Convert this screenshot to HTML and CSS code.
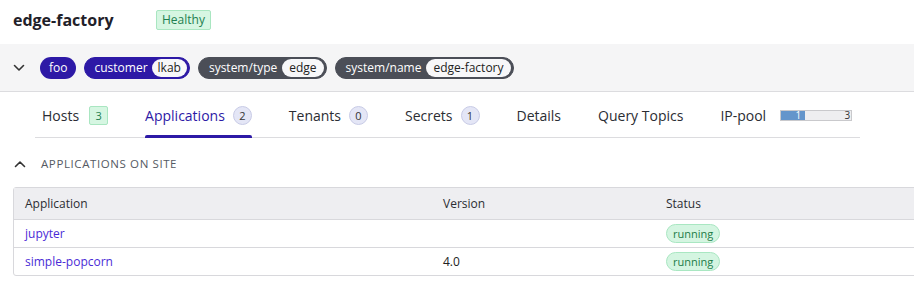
FILE: index.html
```html
<!DOCTYPE html>
<html>
<head>
<meta charset="utf-8">
<link rel="stylesheet" href="styles.css">
</head>
<body>
<div class="page">
  <header class="title-row">
    <h1 class="title">edge-factory</h1>
    <span class="health">Healthy</span>
  </header>
  <div class="labels">
    <svg class="chev" width="12" height="8" viewBox="0 0 12 8"><path d="M1.5 1.5 L6 6 L10.5 1.5" fill="none" stroke="#333" stroke-width="1.6" stroke-linecap="round" stroke-linejoin="round"/></svg>
    <span class="tag tag-blue">foo</span>
    <span class="tag tag-blue tag-kv">customer<span class="val">lkab</span></span>
    <span class="tag tag-gray tag-kv">system/type<span class="val">edge</span></span>
    <span class="tag tag-gray tag-kv">system/name<span class="val">edge-factory</span></span>
  </div>
  <nav class="tabs">
    <div class="tab">Hosts<span class="cnt cnt-green">3</span></div>
    <div class="tab active">Applications<span class="cnt">2</span></div>
    <div class="tab">Tenants<span class="cnt">0</span></div>
    <div class="tab">Secrets<span class="cnt">1</span></div>
    <div class="tab">Details</div>
    <div class="tab">Query Topics</div>
    <div class="tab">IP-pool<span class="pool"><span class="pool-fill" style="width:24px">1</span><span class="pool-max">3</span></span></div>
  </nav>
  <div class="section-head">
    <svg class="chev-up" width="12" height="8" viewBox="0 0 12 8"><path d="M1.5 6.5 L6 2 L10.5 6.5" fill="none" stroke="#333" stroke-width="1.6" stroke-linecap="round" stroke-linejoin="round"/></svg>
    <span>APPLICATIONS ON SITE</span>
  </div>
  <div class="table">
    <div class="row head">
      <div class="c1">Application</div><div class="c2">Version</div><div class="c3">Status</div>
    </div>
    <div class="row">
      <div class="c1"><a>jupyter</a></div><div class="c2"></div><div class="c3"><span class="status">running</span></div>
    </div>
    <div class="row">
      <div class="c1"><a>simple-popcorn</a></div><div class="c2">4.0</div><div class="c3"><span class="status">running</span></div>
    </div>
  </div>
</div>
</body>
</html>
```
FILE: styles.css
```css
html, body { margin: 0; padding: 0; background: #fff; overflow: hidden; }
body { font-family: "Open Sans", "Liberation Sans", sans-serif; color: #222; width: 914px; height: 297px; }
.page { display: flex; flex-direction: column; }

.title-row { display: flex; align-items: center; height: 44px; padding-left: 13px; box-sizing: border-box; padding-bottom: 4px; }
.title { margin: 0; font-size: 16px; font-weight: 700; color: #1f2129; width: 143px; }
.health { font-size: 12px; color: #1e8050; background: #d6f6e2; border: 1px solid #a9e6c1; border-radius: 2px; padding: 0 5px; height: 18px; line-height: 18px; }

.labels { display: flex; align-items: center; gap: 8px; height: 48px; background: #f5f5f6; border-bottom: 1px solid #dcdcdf; padding-left: 13px; box-sizing: border-box; }
.chev { margin-right: 7px; margin-left: 0; }
.tag { display: inline-flex; align-items: center; height: 22px; border-radius: 11px; font-size: 12px; color: #fff; padding: 0 9px; box-sizing: border-box; }
.tag-blue { background: #2d19a6; }
.tag-gray { background: #4b4e57; padding-left: 10px; }
.tag-kv { padding-right: 1px; border: 1px solid transparent; }
.tag-blue.tag-kv { border-color: #2d19a6; }
.tag-gray.tag-kv { border-color: #4b4e57; }
.val { background: #f7f7f9; color: #222; border-radius: 10px; height: 18px; line-height: 18px; padding: 0 6px; margin-left: 4px; margin-right: 1px; }
.tag-gray .val { padding: 0 7px; margin-left: 5px; }

.tabs { display: flex; align-items: stretch; height: 46px; margin-left: 35px; width: 825px; border-bottom: 1px solid #dcdcdf; box-sizing: border-box; padding-left: 7px; gap: 37px; }
.tab { display: flex; align-items: center; font-size: 14px; color: #2b2d33; position: relative; padding-top: 2px; }
.tab.active { color: #2d19a6; }
.tab.active::after { content: ""; position: absolute; left: 0; right: 0; bottom: -1px; height: 3px; background: #2d19a6; border-radius: 2px 2px 0 0; }
.cnt { display: inline-flex; align-items: center; justify-content: center; width: 19px; height: 19px; border-radius: 50%; background: #e4e6f6; border: 1px solid #c8cbe6; box-sizing: border-box; font-size: 11px; color: #333; margin-left: 8px; }
.cnt-green { border-radius: 2px; background: #d6f6e2; border-color: #a9e6c1; color: #1e8050; margin-left: 10px; }
.pool { display: flex; position: relative; width: 72px; height: 11px; background: #eeeef0; border: 1px solid #c9c9cc; box-sizing: border-box; margin-left: 14px; font-size: 10px; line-height: 9px; }
.pool-fill { display: block; flex: none; background: #6495cb; color: #fff; text-align: right; padding-right: 4px; box-sizing: border-box; }
.pool-max { position: absolute; right: 1px; top: 0; color: #333; }

.section-head { display: flex; align-items: center; height: 49px; padding-left: 14px; font-size: 11.5px; letter-spacing: 0.6px; color: #555a63; padding-top: 2px; box-sizing: border-box; }
.chev-up { margin-right: 15px; }

.table { margin-left: 13px; width: 920px; border: 1px solid #d8d8dc; border-radius: 3px; font-size: 12px; }
.row { display: flex; align-items: center; height: 28px; border-top: 1px solid #d8d8dc; box-sizing: border-box; }
.row.head { border-top: none; height: 31px; background: #eeeef1; color: #2b2d33; }
.c1 { width: 418px; padding-left: 11px; }
.c2 { width: 223px; }
.c3 { flex: 1; }
a { color: #4a2bd6; }
.status { display: inline-block; height: 19px; line-height: 18px; padding: 0 6px; border-radius: 10px; background: #d4f5e1; border: 1px solid #a9e7c2; box-sizing: border-box; color: #1c7c48; font-size: 11px; }
```
